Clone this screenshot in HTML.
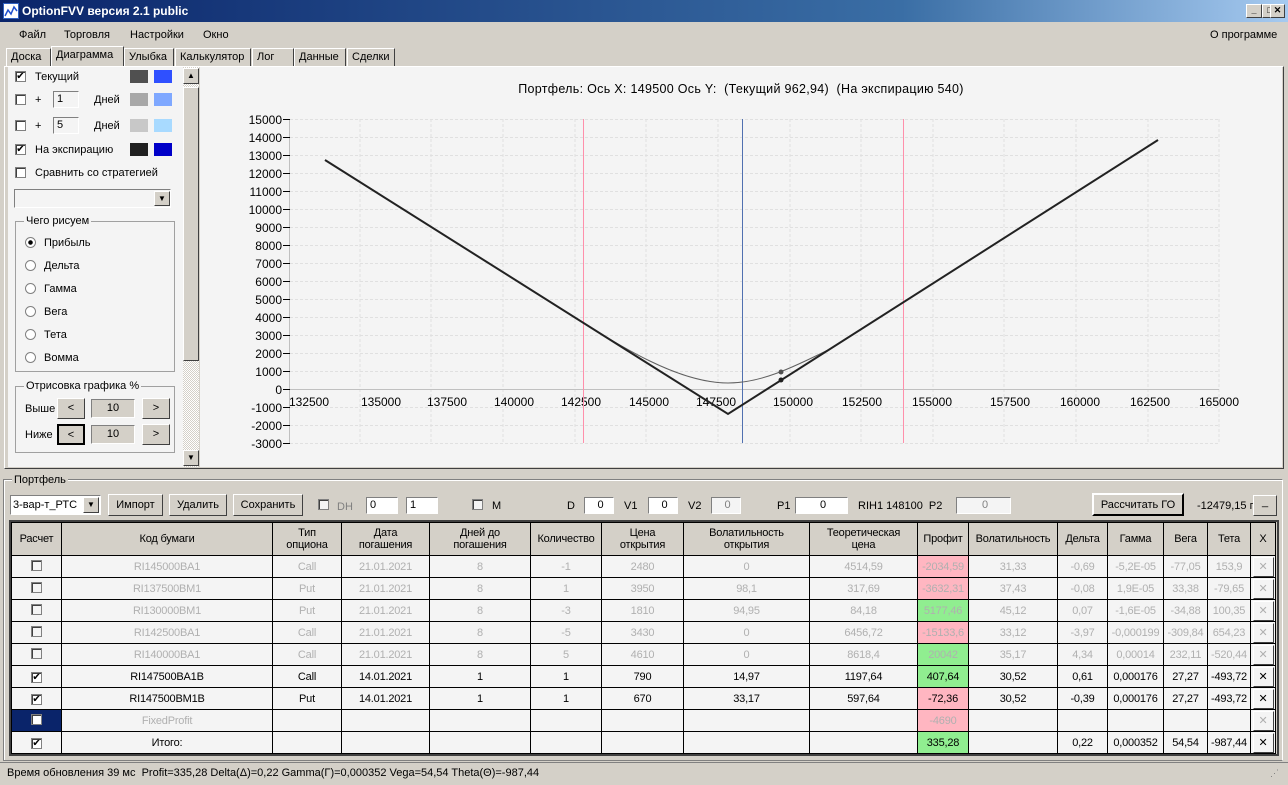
<!DOCTYPE html>
<html><head><meta charset="utf-8"><style>
*{box-sizing:border-box;margin:0;padding:0}
body{width:1288px;height:785px;overflow:hidden;background:#d4d0c8;font-family:"Liberation Sans",sans-serif;font-size:11px;color:#000;position:relative}
.a{position:absolute}
.title{left:0;top:0;width:1288px;height:22px;background:linear-gradient(90deg,#0a246a,#3a6ea5 70%,#a6caf0);color:#fff;font-weight:bold;font-size:12px;line-height:22px;padding-left:22px}
.wb{top:4px;width:16px;height:14px;background:#d4d0c8;border:1px solid;border-color:#fff #404040 #404040 #fff;font-size:9px;line-height:11px;text-align:center;color:#000;font-weight:bold}
.cb{width:11px;height:11px;border:1px solid #808080;background:#fff;box-shadow:inset 1px 1px #404040;font-size:10px;line-height:9px;text-align:center}
.rd{width:11px;height:11px;border-radius:50%;border:1px solid #808080;background:#fff}
.tab{top:48px;height:19px;border:1px solid;border-color:#fff #404040 transparent #fff;line-height:17px;padding:0 4px;background:#d4d0c8}
.sw{width:18px;height:13px}
.inp{height:17px;border:1px solid;border-color:#808080 #fff #fff #808080;background:#f4f4f4;padding-left:3px;line-height:15px}
.btn{border:1px solid;border-color:#fff #404040 #404040 #fff;background:#d4d0c8;text-align:center}
.grp{border:1px solid #a0a0a0}
.gl{background:#f4f4f4;padding:0 2px}
table{border-collapse:collapse;table-layout:fixed;position:absolute;left:11px;top:522px}
td{border:1px solid #000;height:22px;text-align:center;background:#f4f4f4;white-space:nowrap;overflow:hidden;font-size:11px;letter-spacing:-0.2px}
tr.h td{background:#d4d0c8;height:33px;line-height:12px}
tr.g td{color:#b0b0b0}
td.p{background:#ffb6c1}td.n{background:#90ee90}
.x{display:inline-block;width:21px;height:20px;border:1px solid;border-color:#fff #404040 #404040 #fff;background:#f4f4f4;line-height:18px}
</style></head><body>
<div class="a title">OptionFVV версия 2.1 public</div>
<div class="a" style="left:3px;top:3px;width:16px;height:16px;background:#fff;border:1px solid #3060c0"><svg width="14" height="14"><polyline points="1,12 4,6 7,10 10,3 13,7" fill="none" stroke="#2050d0" stroke-width="1.5"/></svg></div>
<div class="a wb" style="left:1234px;left:1233px;left:1232px;left:1230px;left:1232px;left:1233px;left:1234px;left:1235px;left:1236px;left:1237px;left:1238px;left:1239px;left:1240px;left:1241px;left:1242px;left:1243px;left:1244px;left:1245px;left:1246px">_</div><div class="a wb" style="left:1262px">□</div>
<div class="a wb" style="left:1269px;display:none"></div>
<div class="a wb" style="left:1268px;left:1270px;width:15px">✕</div>
<div class="a" style="top:29px;left:19px">Файл</div><div class="a" style="top:29px;left:64px">Торговля</div><div class="a" style="top:29px;left:130px">Настройки</div><div class="a" style="top:29px;left:203px">Окно</div><div class="a" style="top:29px;left:1210px">О программе</div>
<div class="a tab" style="left:6px;width:45px">Доска</div>
<div class="a tab" style="left:51px;top:46px;height:21px;width:73px;background:#d4d0c8">Диаграмма</div>
<div class="a tab" style="left:124px;width:50px">Улыбка</div>
<div class="a tab" style="left:175px;width:76px">Калькулятор</div>
<div class="a tab" style="left:252px;width:42px">Лог</div>
<div class="a tab" style="left:294px;width:52px">Данные</div>
<div class="a tab" style="left:347px;width:48px">Сделки</div>
<div class="a" style="left:4px;top:66px;width:1280px;height:403px;border:1px solid;border-color:#fff #404040 #404040 #fff"></div>
<!-- left panel -->
<div class="a" style="left:8px;top:67px;width:175px;height:400px;background:#f4f4f4"></div>
<div class="a cb" style="left:15px;top:71px">✔</div><div class="a" style="left:35px;top:71px">Текущий</div>
<div class="a sw" style="left:130px;top:70px;background:#505050"></div><div class="a sw" style="left:154px;top:70px;background:#2f50ff"></div>
<div class="a cb" style="left:15px;top:94px"></div><div class="a" style="left:35px;top:94px">+</div><div class="a inp" style="left:53px;top:91px;width:26px">1</div><div class="a" style="left:94px;top:94px">Дней</div>
<div class="a sw" style="left:130px;top:93px;background:#a8a8a8"></div><div class="a sw" style="left:154px;top:93px;background:#7fa8ff"></div>
<div class="a cb" style="left:15px;top:120px"></div><div class="a" style="left:35px;top:120px">+</div><div class="a inp" style="left:53px;top:117px;width:26px">5</div><div class="a" style="left:94px;top:120px">Дней</div>
<div class="a sw" style="left:130px;top:119px;background:#c8c8c8"></div><div class="a sw" style="left:154px;top:119px;background:#a8daff"></div>
<div class="a cb" style="left:15px;top:144px">✔</div><div class="a" style="left:35px;top:144px">На экспирацию</div>
<div class="a sw" style="left:130px;top:143px;background:#202020"></div><div class="a sw" style="left:154px;top:143px;background:#0000c8"></div>
<div class="a cb" style="left:15px;top:167px"></div><div class="a" style="left:35px;top:167px">Сравнить со стратегией</div>
<div class="a inp" style="left:14px;top:189px;width:157px;height:19px"></div><div class="a btn" style="left:154px;top:191px;width:16px;height:15px;font-size:8px;line-height:13px">▼</div>
<div class="a grp" style="left:15px;top:221px;width:160px;height:151px"></div><div class="a gl" style="left:24px;top:215px">Чего рисуем</div>
<div class="a rd" style="left:25px;top:237px;background:radial-gradient(#000 2px,#fff 2.5px)"></div><div class="a" style="left:44px;top:237px">Прибыль</div>
<div class="a rd" style="left:25px;top:260px"></div><div class="a" style="left:44px;top:260px">Дельта</div>
<div class="a rd" style="left:25px;top:283px"></div><div class="a" style="left:44px;top:283px">Гамма</div>
<div class="a rd" style="left:25px;top:306px"></div><div class="a" style="left:44px;top:306px">Вега</div>
<div class="a rd" style="left:25px;top:329px"></div><div class="a" style="left:44px;top:329px">Тета</div>
<div class="a rd" style="left:25px;top:352px"></div><div class="a" style="left:44px;top:352px">Вомма</div>
<div class="a grp" style="left:15px;top:386px;width:160px;height:67px"></div><div class="a gl" style="left:24px;top:380px">Отрисовка графика %</div>
<div class="a" style="left:25px;top:403px">Выше</div><div class="a btn" style="left:57px;top:398px;width:28px;height:21px;line-height:19px">&lt;</div><div class="a" style="left:91px;top:399px;width:44px;height:19px;background:#d4d0c8;border:1px solid;border-color:#808080 #fff #fff #808080;text-align:center;line-height:17px">10</div><div class="a btn" style="left:142px;top:398px;width:28px;height:21px;line-height:19px">&gt;</div>
<div class="a" style="left:25px;top:429px">Ниже</div><div class="a btn" style="left:57px;top:424px;width:28px;height:21px;line-height:19px;border:2px solid #000">&lt;</div><div class="a" style="left:91px;top:425px;width:44px;height:19px;background:#d4d0c8;border:1px solid;border-color:#808080 #fff #fff #808080;text-align:center;line-height:17px">10</div><div class="a btn" style="left:142px;top:424px;width:28px;height:21px;line-height:19px">&gt;</div>
<!-- scrollbar -->
<div class="a" style="left:183px;top:67px;width:16px;height:400px;background:repeating-conic-gradient(#fff 0 25%,#d4d0c8 0 50%) 0 0/2px 2px"></div>
<div class="a btn" style="left:183px;top:68px;width:16px;height:16px;font-size:8px;line-height:14px">▲</div>
<div class="a btn" style="left:183px;top:87px;width:16px;height:274px"></div>
<div class="a btn" style="left:183px;top:450px;width:16px;height:16px;font-size:8px;line-height:14px">▼</div>
<!-- chart -->
<div class="a" style="left:200px;top:67px;width:1082px;height:400px;background:#f4f4f4"></div>
<div class="a" style="left:200px;top:82px;width:1082px;text-align:center;font-size:12.5px;letter-spacing:0.3px">Портфель: Ось X: 149500 Ось Y: &nbsp;(Текущий 962,94) &nbsp;(На экспирацию 540)</div>
<svg class="a" style="left:200px;top:67px" width="1082" height="400" viewBox="200 67 1082 400" font-family="Liberation Sans,sans-serif" font-size="12">
<g stroke="#e0e0e0" stroke-dasharray="3,2" stroke-width="1">
<line x1="290" y1="119.5" x2="1219" y2="119.5"/><line x1="290" y1="137.5" x2="1219" y2="137.5"/><line x1="290" y1="155.5" x2="1219" y2="155.5"/><line x1="290" y1="173.5" x2="1219" y2="173.5"/><line x1="290" y1="191.5" x2="1219" y2="191.5"/><line x1="290" y1="209.5" x2="1219" y2="209.5"/><line x1="290" y1="227.5" x2="1219" y2="227.5"/><line x1="290" y1="245.5" x2="1219" y2="245.5"/><line x1="290" y1="263.5" x2="1219" y2="263.5"/><line x1="290" y1="281.5" x2="1219" y2="281.5"/><line x1="290" y1="299.5" x2="1219" y2="299.5"/><line x1="290" y1="317.5" x2="1219" y2="317.5"/><line x1="290" y1="335.5" x2="1219" y2="335.5"/><line x1="290" y1="353.5" x2="1219" y2="353.5"/><line x1="290" y1="371.5" x2="1219" y2="371.5"/><line x1="290" y1="407.5" x2="1219" y2="407.5"/><line x1="290" y1="425.5" x2="1219" y2="425.5"/><line x1="290" y1="443.5" x2="1219" y2="443.5"/>
<line x1="360" y1="119" x2="360" y2="443"/><line x1="431" y1="119" x2="431" y2="443"/><line x1="503" y1="119" x2="503" y2="443"/><line x1="575" y1="119" x2="575" y2="443"/><line x1="646" y1="119" x2="646" y2="443"/><line x1="718" y1="119" x2="718" y2="443"/><line x1="790" y1="119" x2="790" y2="443"/><line x1="861" y1="119" x2="861" y2="443"/><line x1="933" y1="119" x2="933" y2="443"/><line x1="1004" y1="119" x2="1004" y2="443"/><line x1="1076" y1="119" x2="1076" y2="443"/><line x1="1148" y1="119" x2="1148" y2="443"/><line x1="1219" y1="119" x2="1219" y2="443"/>
</g>
<line x1="289.5" y1="119" x2="289.5" y2="443" stroke="#c0c0c0"/>
<line x1="290" y1="389.5" x2="1219" y2="389.5" stroke="#c0c0c0"/>
<g stroke="#000"><line x1="283" y1="119.5" x2="290" y2="119.5"/><line x1="283" y1="137.5" x2="290" y2="137.5"/><line x1="283" y1="155.5" x2="290" y2="155.5"/><line x1="283" y1="173.5" x2="290" y2="173.5"/><line x1="283" y1="191.5" x2="290" y2="191.5"/><line x1="283" y1="209.5" x2="290" y2="209.5"/><line x1="283" y1="227.5" x2="290" y2="227.5"/><line x1="283" y1="245.5" x2="290" y2="245.5"/><line x1="283" y1="263.5" x2="290" y2="263.5"/><line x1="283" y1="281.5" x2="290" y2="281.5"/><line x1="283" y1="299.5" x2="290" y2="299.5"/><line x1="283" y1="317.5" x2="290" y2="317.5"/><line x1="283" y1="335.5" x2="290" y2="335.5"/><line x1="283" y1="353.5" x2="290" y2="353.5"/><line x1="283" y1="371.5" x2="290" y2="371.5"/><line x1="283" y1="389.5" x2="290" y2="389.5"/><line x1="283" y1="407.5" x2="290" y2="407.5"/><line x1="283" y1="425.5" x2="290" y2="425.5"/><line x1="283" y1="443.5" x2="290" y2="443.5"/></g>
<g text-anchor="end" fill="#000"><text x="282" y="124">15000</text><text x="282" y="142">14000</text><text x="282" y="160">13000</text><text x="282" y="178">12000</text><text x="282" y="196">11000</text><text x="282" y="214">10000</text><text x="282" y="232">9000</text><text x="282" y="250">8000</text><text x="282" y="268">7000</text><text x="282" y="286">6000</text><text x="282" y="304">5000</text><text x="282" y="322">4000</text><text x="282" y="340">3000</text><text x="282" y="358">2000</text><text x="282" y="376">1000</text><text x="282" y="394">0</text><text x="282" y="412">-1000</text><text x="282" y="430">-2000</text><text x="282" y="448">-3000</text></g>
<g text-anchor="middle" fill="#000"><text x="309" y="406">132500</text><text x="381" y="406">135000</text><text x="447" y="406">137500</text><text x="514" y="406">140000</text><text x="581" y="406">142500</text><text x="649" y="406">145000</text><text x="716" y="406">147500</text><text x="793" y="406">150000</text><text x="862" y="406">152500</text><text x="932" y="406">155000</text><text x="1010" y="406">157500</text><text x="1080" y="406">160000</text><text x="1150" y="406">162500</text><text x="1219" y="406">165000</text></g>
<line x1="583.5" y1="119" x2="583.5" y2="443" stroke="#ff8fab"/><line x1="903.5" y1="119" x2="903.5" y2="443" stroke="#ff8fab"/>
<line x1="742.5" y1="119" x2="742.5" y2="443" stroke="#5070b0"/>
<path d="M325 160 L560 308 C625 350,680 383,728 383 C760 383,790 369,830 349 L1158 140" fill="none" stroke="#606060" stroke-width="1"/>
<polyline points="325,160 728,414 1158,140" fill="none" stroke="#222" stroke-width="2"/>
<circle cx="781" cy="372" r="2.5" fill="#505050"/><circle cx="781" cy="380" r="2.5" fill="#202020"/>
</svg>
<!-- portfolio -->
<div class="a" style="left:3px;top:479px;width:1280px;height:282px;border:1px solid #808080;border-right-color:#fff;box-shadow:inset 1px 1px #fff"></div>
<div class="a gl" style="left:12px;top:474px;background:#d4d0c8">Портфель</div>
<div class="a" style="left:10px;top:495px;width:91px;height:20px;background:#fff;border:1px solid;border-color:#808080 #fff #fff #808080;padding-left:2px;line-height:18px">3-вар-т_РТС</div><div class="a btn" style="left:83px;top:497px;width:16px;height:16px;font-size:8px;line-height:14px">▼</div>
<div class="a btn" style="left:108px;top:494px;width:55px;height:22px;line-height:20px">Импорт</div>
<div class="a btn" style="left:169px;top:494px;width:58px;height:22px;line-height:20px">Удалить</div>
<div class="a btn" style="left:233px;top:494px;width:70px;height:22px;line-height:20px">Сохранить</div>
<div class="a cb" style="left:318px;top:499px;background:#f4f4f4"></div><div class="a" style="left:337px;top:501px;color:#808080">DH</div>
<div class="a inp" style="left:366px;top:497px;width:32px;background:#fff">0</div><div class="a inp" style="left:406px;top:497px;width:32px;background:#fff">1</div>
<div class="a cb" style="left:472px;top:499px;background:#f4f4f4"></div><div class="a" style="left:492px;top:500px">M</div>
<div class="a" style="left:567px;top:500px">D</div><div class="a inp" style="left:584px;top:497px;width:30px;background:#fff;text-align:center">0</div>
<div class="a" style="left:624px;top:500px">V1</div><div class="a inp" style="left:648px;top:497px;width:30px;background:#fff;text-align:center">0</div>
<div class="a" style="left:688px;top:500px">V2</div><div class="a inp" style="left:711px;top:497px;width:30px;text-align:center;color:#808080">0</div>
<div class="a" style="left:777px;top:500px">P1</div><div class="a inp" style="left:795px;top:497px;width:53px;background:#fff;text-align:center">0</div>
<div class="a" style="left:858px;top:500px">RIH1 148100 &nbsp;P2</div><div class="a inp" style="left:956px;top:497px;width:55px;text-align:center;color:#808080">0</div>
<div class="a btn" style="left:1092px;top:493px;width:92px;height:23px;line-height:21px;border:2px solid;border-color:#fff #000 #000 #fff">Рассчитать ГО</div>
<div class="a" style="left:1197px;top:500px">-12479,15 п</div><div class="a btn" style="left:1253px;top:495px;width:24px;height:21px">_</div>
<div class="a" style="left:9px;top:520px;width:1270px;height:236px;border:2px solid #404040;background:#d4d0c8"></div>
<table>
<colgroup><col style="width:50px"><col style="width:211px"><col style="width:69px"><col style="width:88px"><col style="width:101px"><col style="width:71px"><col style="width:82px"><col style="width:126px"><col style="width:108px"><col style="width:51px"><col style="width:89px"><col style="width:50px"><col style="width:56px"><col style="width:44px"><col style="width:43px"><col style="width:25px"></colgroup>
<tr class="h"><td>Расчет</td><td>Код бумаги</td><td>Тип<br>опциона</td><td>Дата<br>погашения</td><td>Дней до<br>погашения</td><td>Количество</td><td>Цена<br>открытия</td><td>Волатильность<br>открытия</td><td>Теоретическая<br>цена</td><td>Профит</td><td>Волатильность</td><td>Дельта</td><td>Гамма</td><td>Вега</td><td>Тета</td><td>X</td></tr>
<tr class="g"><td><span class="cb" style="display:inline-block;background:#f4f4f4"></span></td><td>RI145000BA1</td><td>Call</td><td>21.01.2021</td><td>8</td><td>-1</td><td>2480</td><td>0</td><td>4514,59</td><td class="p">-2034,59</td><td>31,33</td><td>-0,69</td><td>-5,2E-05</td><td>-77,05</td><td>153,9</td><td><span class="x">✕</span></td></tr>
<tr class="g"><td><span class="cb" style="display:inline-block;background:#f4f4f4"></span></td><td>RI137500BM1</td><td>Put</td><td>21.01.2021</td><td>8</td><td>1</td><td>3950</td><td>98,1</td><td>317,69</td><td class="p">-3632,31</td><td>37,43</td><td>-0,08</td><td>1,9E-05</td><td>33,38</td><td>-79,65</td><td><span class="x">✕</span></td></tr>
<tr class="g"><td><span class="cb" style="display:inline-block;background:#f4f4f4"></span></td><td>RI130000BM1</td><td>Put</td><td>21.01.2021</td><td>8</td><td>-3</td><td>1810</td><td>94,95</td><td>84,18</td><td class="n">5177,46</td><td>45,12</td><td>0,07</td><td>-1,6E-05</td><td>-34,88</td><td>100,35</td><td><span class="x">✕</span></td></tr>
<tr class="g"><td><span class="cb" style="display:inline-block;background:#f4f4f4"></span></td><td>RI142500BA1</td><td>Call</td><td>21.01.2021</td><td>8</td><td>-5</td><td>3430</td><td>0</td><td>6456,72</td><td class="p">-15133,6</td><td>33,12</td><td>-3,97</td><td>-0,000199</td><td>-309,84</td><td>654,23</td><td><span class="x">✕</span></td></tr>
<tr class="g"><td><span class="cb" style="display:inline-block;background:#f4f4f4"></span></td><td>RI140000BA1</td><td>Call</td><td>21.01.2021</td><td>8</td><td>5</td><td>4610</td><td>0</td><td>8618,4</td><td class="n">20042</td><td>35,17</td><td>4,34</td><td>0,00014</td><td>232,11</td><td>-520,44</td><td><span class="x">✕</span></td></tr>
<tr><td><span class="cb" style="display:inline-block">✔</span></td><td>RI147500BA1B</td><td>Call</td><td>14.01.2021</td><td>1</td><td>1</td><td>790</td><td>14,97</td><td>1197,64</td><td class="n">407,64</td><td>30,52</td><td>0,61</td><td>0,000176</td><td>27,27</td><td>-493,72</td><td><span class="x">✕</span></td></tr>
<tr><td><span class="cb" style="display:inline-block">✔</span></td><td>RI147500BM1B</td><td>Put</td><td>14.01.2021</td><td>1</td><td>1</td><td>670</td><td>33,17</td><td>597,64</td><td class="p">-72,36</td><td>30,52</td><td>-0,39</td><td>0,000176</td><td>27,27</td><td>-493,72</td><td><span class="x">✕</span></td></tr>
<tr class="g"><td style="background:#0a246a"><span class="cb" style="display:inline-block"></span></td><td>FixedProfit</td><td></td><td></td><td></td><td></td><td></td><td></td><td></td><td class="p">-4690</td><td></td><td></td><td></td><td></td><td></td><td><span class="x">✕</span></td></tr>
<tr><td><span class="cb" style="display:inline-block">✔</span></td><td>Итого:</td><td></td><td></td><td></td><td></td><td></td><td></td><td></td><td class="n">335,28</td><td></td><td>0,22</td><td>0,000352</td><td>54,54</td><td>-987,44</td><td><span class="x">✕</span></td></tr>
</table>
<div class="a" style="left:0;top:762px;width:1288px;height:23px;border-top:1px solid #808080;padding:4px 0 0 7px">Время обновления 39 мс &nbsp;Profit=335,28 Delta(Δ)=0,22 Gamma(Γ)=0,000352 Vega=54,54 Theta(Θ)=-987,44</div>
<div class="a" style="left:1270px;top:768px;color:#808080;font-size:9px">⋰</div>
</body></html>
